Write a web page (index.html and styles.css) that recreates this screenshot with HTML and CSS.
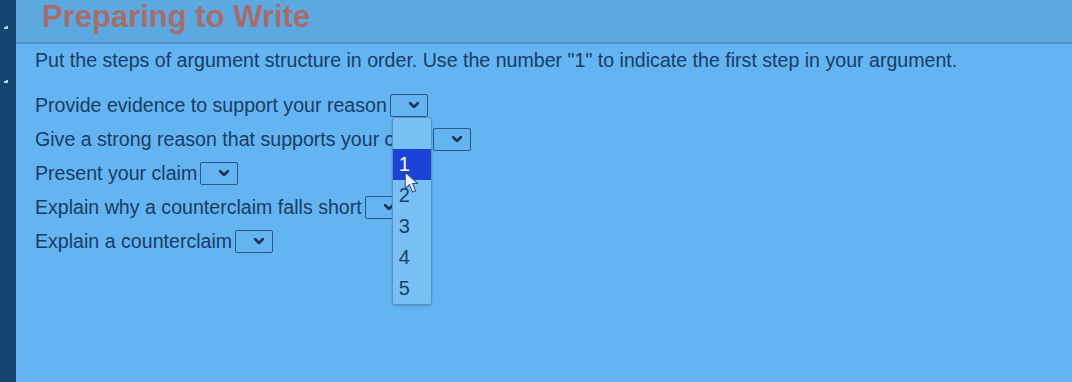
FILE: index.html
```
<!DOCTYPE html>
<html>
<head>
<meta charset="utf-8">
<link rel="stylesheet" href="styles.css">
</head>
<body>
<div class="screen">
  <aside class="strip">
    <span class="mark mark-a"></span>
    <span class="mark mark-b"></span>
  </aside>
  <main class="main">
    <header class="header">
      <h1 class="title">Preparing to Write</h1>
    </header>
    <section class="content">
      <p class="instructions">Put the steps of argument structure in order. Use the number "1" to indicate the first step in your argument.</p>
      <div class="rows">
        <div class="row">
          <span class="label">Provide evidence to support your reason</span>
          <span class="select-wrap">
            <span class="select"><svg class="chev" viewBox="0 0 10 6"><path d="M1 1 L5 5 L9 1" /></svg></span>
            <ul class="dropdown">
              <li class="opt"></li>
              <li class="opt active">1</li>
              <li class="opt">2</li>
              <li class="opt">3</li>
              <li class="opt">4</li>
              <li class="opt">5</li>
            </ul>
            <svg class="cursor" viewBox="0 0 14 22"><path d="M1 1 L1 17 L5 13 L8 20 L11 19 L8 12 L13 12 Z" /></svg>
          </span>
        </div>
        <div class="row">
          <span class="label">Give a strong reason that supports your claim</span>
          <span class="select"><svg class="chev" viewBox="0 0 10 6"><path d="M1 1 L5 5 L9 1" /></svg></span>
        </div>
        <div class="row">
          <span class="label">Present your claim</span>
          <span class="select"><svg class="chev" viewBox="0 0 10 6"><path d="M1 1 L5 5 L9 1" /></svg></span>
        </div>
        <div class="row">
          <span class="label">Explain why a counterclaim falls short</span>
          <span class="select"><svg class="chev" viewBox="0 0 10 6"><path d="M1 1 L5 5 L9 1" /></svg></span>
        </div>
        <div class="row">
          <span class="label">Explain a counterclaim</span>
          <span class="select"><svg class="chev" viewBox="0 0 10 6"><path d="M1 1 L5 5 L9 1" /></svg></span>
        </div>
      </div>
    </section>
  </main>
</div>
</body>
</html>
```
FILE: styles.css
```
* { box-sizing: border-box; }
html, body {
  margin: 0;
  padding: 0;
}
body {
  width: 1072px;
  height: 382px;
  overflow: hidden;
  font-family: "Liberation Sans", Arial, sans-serif;
  background: #62b2ee;
}
.screen {
  display: flex;
  width: 1072px;
  height: 382px;
}
.strip {
  width: 16px;
  flex: none;
  background: #15466f;
  position: relative;
}
.mark {
  position: absolute;
  left: 4px;
  width: 4px;
  height: 3px;
  border-bottom: 2px solid #b9d4ea;
  border-right: 2px solid #b9d4ea;
}
.mark-a { top: 26px; }
.mark-b { top: 80px; }
.main {
  flex: 1;
  display: flex;
  flex-direction: column;
  background: #63b4f1;
}
.header {
  height: 44px;
  background: #5ba9e0;
  border-bottom: 2px solid #4d92c6;
  padding-left: 26px;
}
.title {
  margin: 0;
  font-size: 31px;
  line-height: 34px;
  font-weight: bold;
  color: #a56e6c;
}
.content {
  padding: 4px 0 0 19px;
  color: #193c66;
}
.instructions {
  margin: 0;
  font-size: 19.6px;
  line-height: 24px;
}
.rows {
  margin-top: 16px;
  display: flex;
  flex-direction: column;
}
.row {
  height: 34px;
  display: flex;
  align-items: center;
  font-size: 19.6px;
}
.label { white-space: nowrap; }
.select-wrap {
  position: relative;
  display: flex;
}
.select {
  margin-left: 3px;
  width: 38px;
  height: 23px;
  border: 1.5px solid #2c558a;
  border-radius: 2px;
  display: flex;
  align-items: center;
  justify-content: flex-end;
  padding-right: 8px;
}
.chev {
  width: 10px;
  height: 6px;
}
.chev path {
  fill: none;
  stroke: #1c3557;
  stroke-width: 2.6;
  stroke-linecap: round;
  stroke-linejoin: round;
}
.dropdown {
  position: absolute;
  left: 5px;
  top: 23px;
  width: 40px;
  margin: 0;
  padding: 0;
  list-style: none;
  background: #78bff3;
  border: 1px solid #5d8fbd;
  border-radius: 3px;
  z-index: 5;
  box-shadow: 0 1px 2px rgba(20, 60, 100, 0.25);
}
.opt {
  height: 31px;
  padding-left: 6px;
  line-height: 31px;
  font-size: 20px;
  color: #1c406a;
}
.opt.active {
  background: #1a44d6;
  color: #ffffff;
}
.cursor {
  position: absolute;
  left: 17px;
  top: 77px;
  width: 15px;
  height: 23px;
  z-index: 6;
}
.cursor path {
  fill: #e6f1fb;
  stroke: #2b4e7c;
  stroke-width: 1;
  stroke-linejoin: round;
}
```
